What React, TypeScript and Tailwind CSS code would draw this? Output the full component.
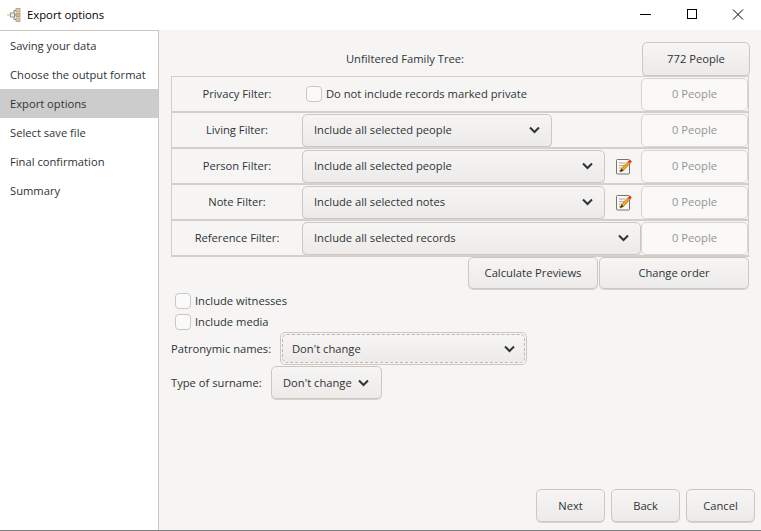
import React from "react";

const font = { fontFamily: '"Open Sans", "Noto Sans", sans-serif' };

function Chevron() {
  return (
    <svg width="11" height="8" viewBox="0 0 11 8" className="shrink-0">
      <path d="M1 1.5 L5.5 6 L10 1.5" fill="none" stroke="#2e3436" strokeWidth="2" />
    </svg>
  );
}

function Combo({ label, className = "" }: { label: string; className?: string }) {
  return (
    <div className={`h-[33px] rounded-[5px] border border-[#cdc7c2] bg-gradient-to-b from-[#f6f5f4] to-[#edebe9] shadow-[0_1px_0_#d8d4d0] flex items-center justify-between pl-[11px] pr-[11px] text-[#2e3436] ${className}`}>
      <span>{label}</span>
      <Chevron />
    </div>
  );
}

function Btn({ children, className = "" }: { children: React.ReactNode; className?: string }) {
  return (
    <div className={`rounded-[5px] border border-[#cdc7c2] bg-gradient-to-b from-[#f6f5f4] to-[#edebe9] shadow-[0_1px_0_#d8d4d0] flex items-center justify-center text-[#2e3436] ${className}`}>
      {children}
    </div>
  );
}

function Count() {
  return (
    <div className="w-[107px] h-[33px] shrink-0 rounded-[5px] border border-[#d8d4d0] bg-[#faf9f8] flex items-center justify-center text-[#929595]">
      0 People
    </div>
  );
}

function Edit() {
  return (
    <svg width="16" height="17" viewBox="0 0 16 17" className="shrink-0">
      <rect x="0.5" y="1.5" width="13" height="14.5" rx="1" fill="#f8f8f6" stroke="#77736e" />
      <path d="M3 5h6M3 7.5h5M3 10h3M3 12.5h2" stroke="#a8a8a4" strokeWidth="1" />
      <path d="M4 14 L5.5 10.5 L12 3.5 L14 5.5 L7.5 12.5 Z" fill="#f2a61f" stroke="#a5651a" strokeWidth="0.6" />
      <path d="M12 3.5 L13.8 1.5 L15.8 3.4 L14 5.5 Z" fill="#d8362a" />
      <path d="M4 14 L5.5 10.5 L7.5 12.5 Z" fill="#3a2c20" />
    </svg>
  );
}

function Check({ label }: { label: string }) {
  return (
    <div className="flex items-center gap-[4px] h-[21px] text-[#2e3436]">
      <div className="w-[16px] h-[16px] rounded-[4px] border border-[#cdc7c2] bg-[#fbfafa]" />
      <span>{label}</span>
    </div>
  );
}

function Row({ label, children }: { label: string; children: React.ReactNode }) {
  return (
    <div className="h-[36px] flex items-center border-b-2 border-[#d3cec9]">
      <div className="w-[130px] shrink-0 text-center text-[#2e3436]">{label}</div>
      {children}
    </div>
  );
}

const steps = ["Saving your data", "Choose the output format", "Export options", "Select save file", "Final confirmation", "Summary"];

export default function App() {
  return (
    <div className="w-[761px] h-[531px] overflow-hidden flex flex-col bg-white text-[11.2px] leading-none" style={font}>
      <div className="h-[30px] shrink-0 flex items-center bg-white">
        <svg width="15" height="16" viewBox="0 0 15 16" className="ml-[6px]">
          <path d="M1 8h4" stroke="#e6dccb" strokeWidth="2" fill="none" />
          <path d="M8 3.5V12.5M8 3.5h2M8 8h2M8 12.5h2" stroke="#8a7f70" fill="none" />
          <rect x="10" y="1.5" width="4" height="3.5" fill="#e3c9a4" stroke="#a5906f" strokeWidth="0.7" />
          <rect x="10" y="6.2" width="4" height="3.5" fill="#d8b78a" stroke="#a5906f" strokeWidth="0.7" />
          <rect x="10" y="11" width="4" height="3.5" fill="#e3c9a4" stroke="#a5906f" strokeWidth="0.7" />
          <rect x="4.5" y="6" width="4" height="4" fill="#f1efe9" stroke="#77736e" strokeWidth="0.7" />
        </svg>
        <span className="ml-[6px] text-[#000] text-[11.3px]">Export options</span>
        <div className="ml-auto flex items-center">
          <svg width="46" height="30" viewBox="0 0 46 30"><path d="M17 14.5h11" stroke="#000" /></svg>
          <svg width="46" height="30" viewBox="0 0 46 30"><rect x="18.5" y="9.5" width="9" height="9" fill="none" stroke="#000" /></svg>
          <svg width="46" height="30" viewBox="0 0 46 30"><path d="M18 9.5l10 10M28 9.5l-10 10" stroke="#000" /></svg>
        </div>
      </div>
      <div className="flex-1 flex min-h-0 border-b border-[#7d7d7d]">
        <div className="w-[159px] shrink-0 bg-white border-r border-t border-[#cdc7c2]">
          {steps.map((s, i) => (
            <div key={s} className={`h-[29px] flex items-center pl-[10px] text-[#2e3436] ${i === 2 ? "bg-[#cccccc]" : ""}`}>{s}</div>
          ))}
        </div>
        <div className="flex-1 bg-[#f6f5f4] flex flex-col pl-[12px] pr-[6px] pt-[12px] pb-[8px]">
          <div className="flex items-center h-[34px] pr-[5px]">
            <div className="flex-1 text-center text-[#2e3436] pr-[3px]">Unfiltered Family Tree:</div>
            <Btn className="w-[108px] h-[34px]">772 People</Btn>
          </div>
          <div className="w-[578px] border-l border-t border-r border-[#d3cec9]">
            <Row label="Privacy Filter:">
              <div className="flex items-center gap-[4px] text-[#2e3436] flex-1">
                <div className="w-[16px] h-[16px] ml-[4px] rounded-[4px] border border-[#cdc7c2] bg-[#fbfafa]" />
                <span>Do not include records marked private</span>
              </div>
              <Count />
            </Row>
            <Row label="Living Filter:">
              <Combo label="Include all selected people" className="w-[250px]" />
              <div className="flex-1" />
              <Count />
            </Row>
            <Row label="Person Filter:">
              <Combo label="Include all selected people" className="w-[303px]" />
              <div className="flex-1 flex justify-center pl-[1px]"><Edit /></div>
              <Count />
            </Row>
            <Row label="Note Filter:">
              <Combo label="Include all selected notes" className="w-[303px]" />
              <div className="flex-1 flex justify-center pl-[1px]"><Edit /></div>
              <Count />
            </Row>
            <Row label="Reference Filter:">
              <Combo label="Include all selected records" className="flex-1" />
              <Count />
            </Row>
          </div>
          <div className="flex justify-end gap-[1px] w-[578px] h-[33px]">
            <Btn className="w-[130px] h-[32px]">Calculate Previews</Btn>
            <Btn className="w-[150px] h-[32px]">Change order</Btn>
          </div>
          <div className="pl-[4px] flex flex-col">
            <Check label="Include witnesses" />
            <Check label="Include media" />
          </div>
          <div className="flex items-center h-[33px]">
            <span className="w-[109px] text-[#2e3436]">Patronymic names:</span>
            <div className="rounded-[5px] border border-[#cdc7c2] p-[1px]">
              <Combo label="Don't change" className="w-[243px] h-[29px]! pl-[9px]! pr-[9px]! border-dashed! border-[#bdb8b3]! shadow-none!" />
            </div>
          </div>
          <div className="flex items-center mt-[1px]">
            <span className="w-[100px] text-[#2e3436]">Type of surname:</span>
            <div className="h-[33px] w-[111px] rounded-[5px] border border-[#cdc7c2] bg-gradient-to-b from-[#f6f5f4] to-[#edebe9] shadow-[0_1px_0_#d8d4d0] flex items-center gap-[6px] pl-[11px] text-[#2e3436]">
              <span>Don't change</span>
              <Chevron />
            </div>
          </div>
          <div className="mt-auto flex justify-end gap-[6px]">
            <Btn className="w-[69px] h-[33px]">Next</Btn>
            <Btn className="w-[69px] h-[33px]">Back</Btn>
            <Btn className="w-[69px] h-[33px]">Cancel</Btn>
          </div>
        </div>
      </div>
    </div>
  );
}
